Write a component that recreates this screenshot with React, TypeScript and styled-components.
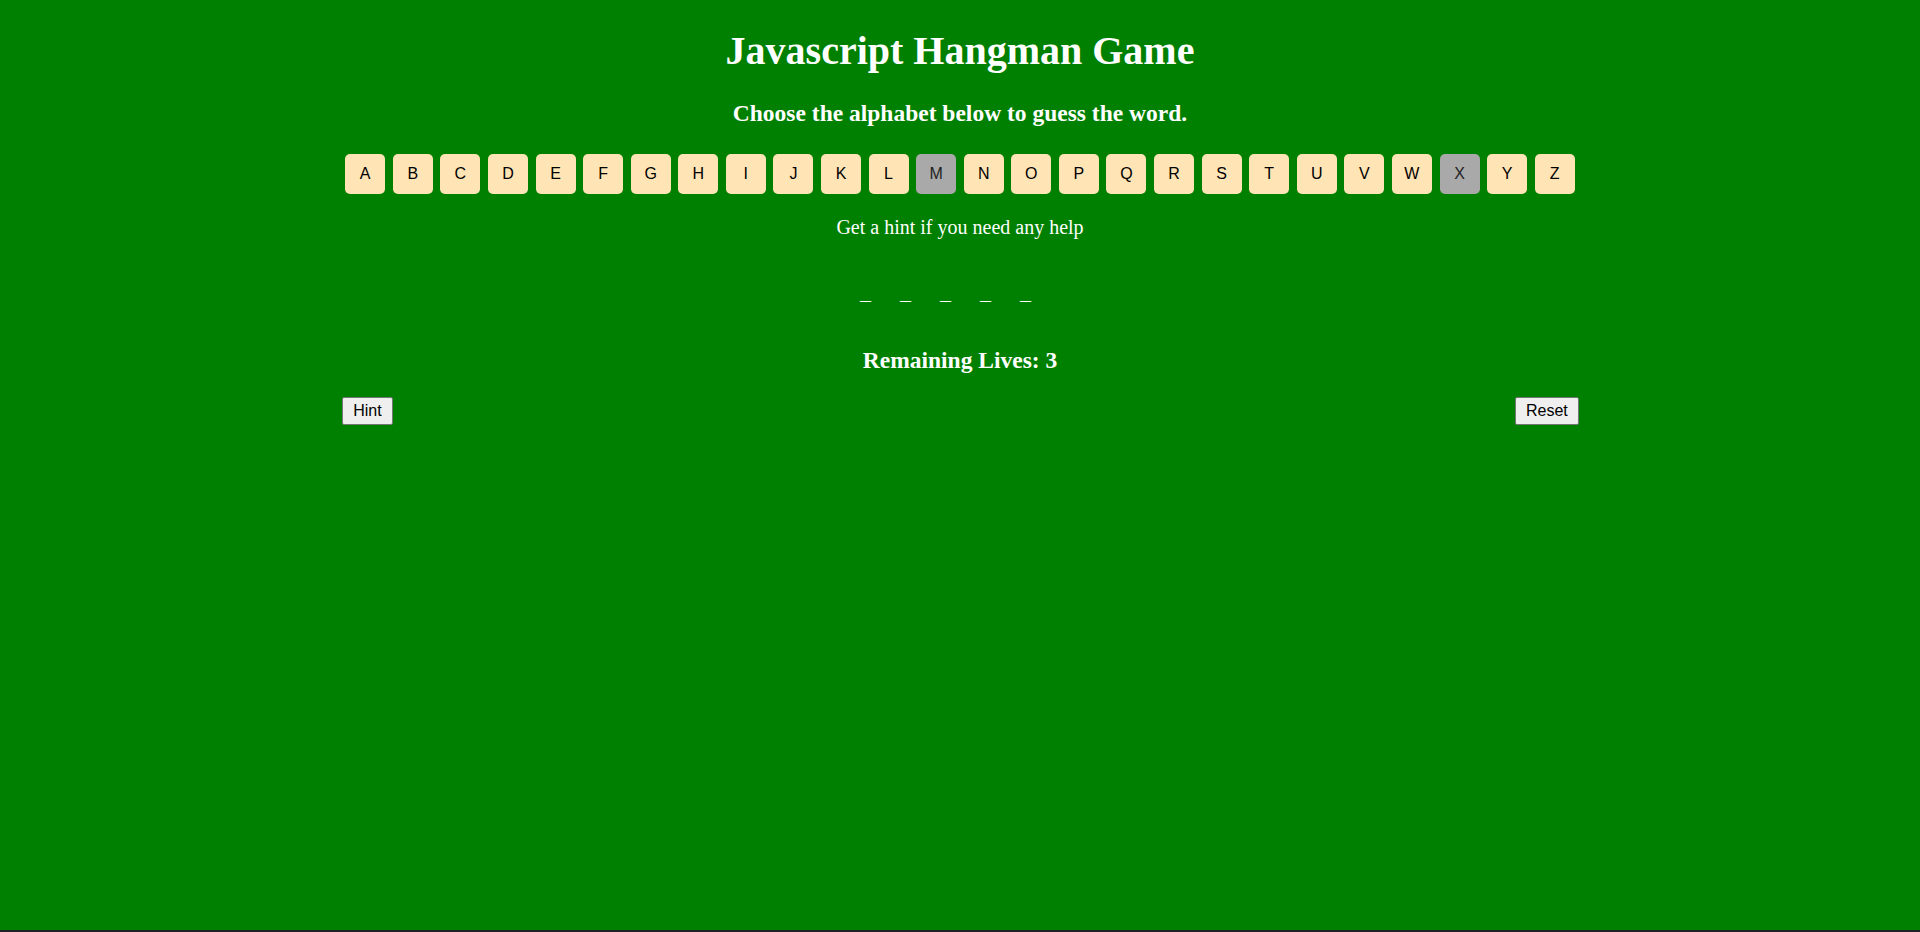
import React, { useState } from "react";
import styled, { createGlobalStyle } from "styled-components";

const ALPHABET = "ABCDEFGHIJKLMNOPQRSTUVWXYZ".split("");
const WORD_LENGTH = 5;

const GlobalStyle = createGlobalStyle`
  html {
    background-color: #202124;
  }
  body {
    margin: 0;
    font-family: "Liberation Serif", "Times New Roman", serif;
  }
`;

const Page = styled.div`
  min-height: 930px;
  box-sizing: border-box;
  padding: 8px;
  background-color: #008000;
  color: #ffffff;
`;

const Game = styled.div`
  width: 65%;
  margin: 0 auto;
  text-align: center;
`;

const Title = styled.h1`
  margin: 19px 0 0;
  font-size: 40px;
  font-weight: bold;
`;

const Subtitle = styled.h3`
  margin: 26px 0 0;
  font-size: 23.5px;
  font-weight: bold;
`;

const LetterRow = styled.div`
  display: flex;
  justify-content: space-between;
  margin-top: 27px;
  padding: 0 4px;
`;

const LetterButton = styled.button<{ $used: boolean }>`
  width: 40px;
  height: 40px;
  padding: 0;
  border: none;
  border-radius: 5px;
  background-color: ${({ $used }) => ($used ? "#a9a9a9" : "#ffe4b5")};
  color: ${({ $used }) => ($used ? "#222222" : "#000000")};
  font-family: "Liberation Sans", Arial, sans-serif;
  font-size: 16px;
  cursor: ${({ $used }) => ($used ? "default" : "pointer")};
`;

const HintText = styled.p`
  margin: 22px 0 0;
  font-size: 20px;
`;

const Blanks = styled.div`
  margin-top: 40px;
  font-size: 22px;
  line-height: normal;
`;

const Blank = styled.span`
  margin-right: 29px;
`;

const Lives = styled.h3`
  margin: 42px 0 0;
  font-size: 23.5px;
  font-weight: bold;
`;

const Controls = styled.div`
  display: flex;
  justify-content: space-between;
  margin-top: 23px;
  padding-left: 1px;
`;

const ControlButton = styled.button`
  height: 28px;
  padding: 0 10px;
  border: 1px solid #767676;
  border-radius: 2px;
  background-color: #efefef;
  color: #000000;
  font-family: "Liberation Sans", Arial, sans-serif;
  font-size: 16px;
`;

export default function App() {
  const [used, setUsed] = useState<string[]>(["M", "X"]);
  const [lives, setLives] = useState(3);

  const guess = (letter: string) => {
    if (used.includes(letter)) return;
    setUsed([...used, letter]);
    setLives((l) => Math.max(0, l - 1));
  };

  return (
    <Page>
      <GlobalStyle />
      <Game>
        <Title>Javascript Hangman Game</Title>
        <Subtitle>Choose the alphabet below to guess the word.</Subtitle>
        <LetterRow>
          {ALPHABET.map((letter) => (
            <LetterButton
              key={letter}
              $used={used.includes(letter)}
              onClick={() => guess(letter)}
            >
              {letter}
            </LetterButton>
          ))}
        </LetterRow>
        <HintText>Get a hint if you need any help</HintText>
        <Blanks>
          {Array.from({ length: WORD_LENGTH }).map((_, index) => (
            <Blank key={index}>_</Blank>
          ))}
        </Blanks>
        <Lives>Remaining Lives: {lives}</Lives>
        <Controls>
          <ControlButton>Hint</ControlButton>
          <ControlButton
            onClick={() => {
              setUsed([]);
              setLives(3);
            }}
          >
            Reset
          </ControlButton>
        </Controls>
      </Game>
    </Page>
  );
}
